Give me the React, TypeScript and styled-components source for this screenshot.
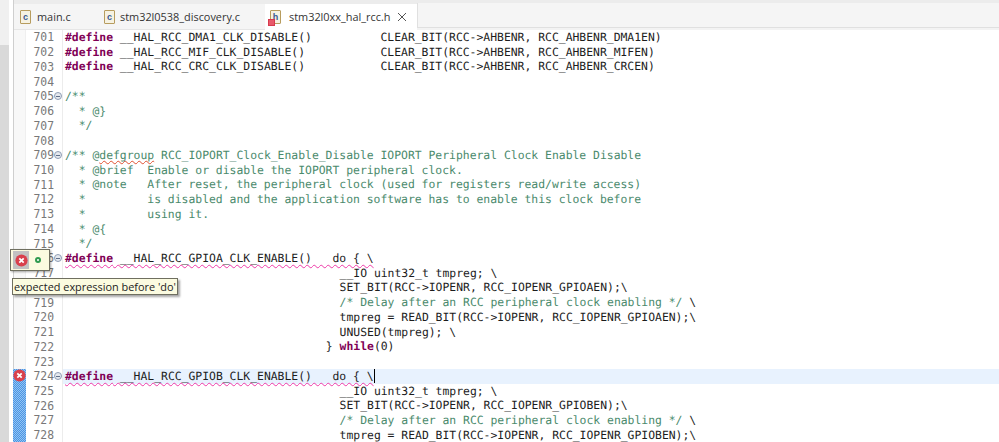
import React from 'react';
import styled, { createGlobalStyle } from 'styled-components';

const GlobalStyle = createGlobalStyle`
  html, body {
    margin: 0;
    padding: 0;
    background: #ffffff;
    overflow: hidden;
  }
`;

const Window = styled.div`
  position: relative;
  width: 999px;
  height: 442px;
  display: flex;
  overflow: hidden;
  background: #ffffff;
`;

const SideStrip = styled.div`
  width: 14px;
  flex: none;
  display: flex;
  flex-direction: column;
  background: #f2f2f2;
  border-right: 1px solid #cfcfcf;
  box-sizing: border-box;
`;

const SideHead = styled.div`
  height: 45px;
  flex: none;
  border-right: 4px solid #ffffff;
  background: #f0f0f0;
`;

const SideBody = styled.div`
  flex: 1;
  border-right: 4px solid #ffffff;
  background: #d9d9d9;
`;

const Main = styled.div`
  flex: 1;
  min-width: 0;
  display: flex;
  flex-direction: column;
`;

const TabBar = styled.div`
  height: 30px;
  flex: none;
  display: flex;
  align-items: flex-end;
  background: #f3f3f3;
  box-sizing: border-box;
  padding-top: 4px;
  box-shadow: inset 0 4px 0 #ececec;
`;

const Tab = styled.div<{ $active?: boolean; $width: number; $pad: number; $gap: number }>`
  width: ${(p) => p.$width}px;
  height: 100%;
  display: flex;
  align-items: center;
  gap: ${(p) => p.$gap}px;
  padding-left: ${(p) => p.$pad}px;
  box-sizing: border-box;
  background: ${(p) => (p.$active ? '#ffffff' : '#f5f5f5')};
  border-bottom: 1px solid ${(p) => (p.$active ? '#ffffff' : '#e6e6e6')};
  font-family: 'Open Sans', 'Liberation Sans', sans-serif;
  font-size: 10.9px;
  color: #333333;
  white-space: nowrap;
`;

const TabFiller = styled.div`
  flex: 1;
  height: 24px;
  margin-bottom: 2px;
  background: #f5f5f5;
  border-left: 1px solid #e0e0e0;
  border-bottom: 1px solid #e0e0e0;
`;

const FileIcon = styled.span`
  position: relative;
  width: 11px;
  height: 14px;
  flex: none;
  border: 1px solid #b79c5e;
  border-radius: 1px;
  background: #f6f2e2;
  box-sizing: border-box;
  display: flex;
  align-items: center;
  justify-content: center;
  font-family: 'Liberation Sans', sans-serif;
  font-size: 9px;
  font-weight: 700;
  color: #3a5a94;
`;

const ErrorBadge = styled.span`
  position: absolute;
  left: -3px;
  bottom: -3px;
  width: 7px;
  height: 7px;
  background: #e85a6a;
  border: 1px solid #d83a4e;
  box-sizing: border-box;
`;

const CloseIcon = styled.svg`
  width: 10px;
  height: 10px;
  flex: none;
  margin-left: -1px;
`;

const Editor = styled.div`
  flex: 1;
  min-height: 0;
  display: flex;
  position: relative;
`;

const Ruler = styled.div`
  width: 11px;
  flex: none;
  background: #f8f8f8;
  border-right: 1px solid #efefef;
`;

const Gutter = styled.div`
  width: 36px;
  flex: none;
  border-right: 1px solid #ececec;
`;

const Code = styled.div`
  flex: 1;
  min-width: 0;
`;

const lineHeight = 14.74;

const GutterRow = styled.div`
  height: ${lineHeight}px;
  display: flex;
  align-items: center;
  font-family: 'DejaVu Sans Mono', monospace;
  font-size: 11.4px;
  color: #787878;
`;

const LineNo = styled.span`
  width: 28px;
  text-align: right;
`;

const FoldMark = styled.span`
  width: 8px;
  height: 8px;
  border: 1px solid #8f9db4;
  border-radius: 50%;
  background: #e4e8ee;
  box-sizing: border-box;
  display: flex;
  align-items: center;
  justify-content: center;
  &::before {
    content: '';
    width: 4px;
    height: 1px;
    background: #5f6f89;
  }
`;

const CodeRow = styled.div<{ $current?: boolean; $indent: number }>`
  height: ${lineHeight}px;
  padding-left: ${(p) => 2 + p.$indent * 6.865}px;
  line-height: ${lineHeight}px;
  font-family: 'DejaVu Sans Mono', monospace;
  font-size: 11.4px;
  color: #1c1c1c;
  white-space: pre;
  text-rendering: geometricPrecision;
  font-variant-ligatures: none;
  background: ${(p) => (p.$current ? '#e8f2fe' : 'transparent')};
`;

const Keyword = styled.span`
  color: #7f0055;
  font-weight: 700;
`;

const Comment = styled.span`
  color: #4a8a6c;
`;

const Squiggle = styled.span`
  text-decoration: underline wavy #ee3aa8 1px;
  text-decoration-skip-ink: none;
  text-underline-offset: 2px;
`;

const SpellWord = styled.span`
  text-decoration: underline wavy #e05030 1px;
  text-decoration-skip-ink: none;
  text-underline-offset: 1px;
`;

const Caret = styled.span`
  display: inline-block;
  width: 1px;
  height: 14px;
  background: #000000;
  vertical-align: top;
`;

const AnnotationBar = styled.div`
  position: absolute;
  left: -1px;
  top: 339px;
  width: 13px;
  height: 73px;
  background-image: repeating-conic-gradient(#4a94e4 0 25%, #93c4f2 0 50%);
  background-size: 2px 2px;
`;

const GutterError = styled.span`
  position: absolute;
  left: 13px;
  top: 369px;
  display: flex;
`;

const HoverBox = styled.div`
  position: absolute;
  left: 10px;
  top: 249px;
  width: 40px;
  height: 22px;
  display: flex;
  align-items: center;
  gap: 6px;
  padding-left: 2px;
  box-sizing: border-box;
  background: #fbfbe0;
  border: 1px solid #6f6f60;
  box-shadow: 1px 1px 2px rgba(0, 0, 0, 0.35);
`;

const HoverIconCell = styled.span`
  width: 16px;
  height: 18px;
  background: #c2c2c2;
  display: flex;
  align-items: center;
  justify-content: center;
`;

const GreenDot = styled.span`
  width: 6px;
  height: 6px;
  border: 2px solid #2e9a4e;
  border-radius: 50%;
  background: #ffffff;
  box-sizing: border-box;
`;

const Tooltip = styled.div`
  position: absolute;
  left: 12px;
  top: 278px;
  height: 17px;
  padding: 0 1px;
  display: flex;
  align-items: center;
  box-sizing: border-box;
  background: #fbfbe0;
  border: 1px solid #6f6f60;
  box-shadow: 2px 2px 2px rgba(0, 0, 0, 0.35);
  font-family: 'Open Sans', 'Liberation Sans', sans-serif;
  font-size: 10.9px;
  color: #222222;
  white-space: nowrap;
`;

const ErrorIcon = () => (
  <svg width="13" height="13" viewBox="0 0 13 13">
    <circle cx="6.5" cy="6.5" r="6.1" fill="#d9404c" />
    <path d="M4.3 4.3l4.4 4.4M8.7 4.3l-4.4 4.4" stroke="#ffffff" strokeWidth="1.7" />
  </svg>
);

type Seg = { t: string; k?: 'kw' | 'c' | 'sq' | 'sp' | 'caret' };
type Line = { n: number; fold?: boolean; current?: boolean; indent?: number; segs: Seg[] };

const pad = (n: number) => ' '.repeat(n);

const lines: Line[] = [
  { n: 701, segs: [{ t: '#define', k: 'kw' }, { t: ' __HAL_RCC_DMA1_CLK_DISABLE()' + pad(10) + 'CLEAR_BIT(RCC->AHBENR, RCC_AHBENR_DMA1EN)' }] },
  { n: 702, segs: [{ t: '#define', k: 'kw' }, { t: ' __HAL_RCC_MIF_CLK_DISABLE()' + pad(11) + 'CLEAR_BIT(RCC->AHBENR, RCC_AHBENR_MIFEN)' }] },
  { n: 703, segs: [{ t: '#define', k: 'kw' }, { t: ' __HAL_RCC_CRC_CLK_DISABLE()' + pad(11) + 'CLEAR_BIT(RCC->AHBENR, RCC_AHBENR_CRCEN)' }] },
  { n: 704, segs: [] },
  { n: 705, fold: true, segs: [{ t: '/**', k: 'c' }] },
  { n: 706, segs: [{ t: '  * @}', k: 'c' }] },
  { n: 707, segs: [{ t: '  */', k: 'c' }] },
  { n: 708, segs: [] },
  { n: 709, fold: true, segs: [{ t: '/** @', k: 'c' }, { t: 'defgroup', k: 'sp' }, { t: ' RCC_IOPORT_Clock_Enable_Disable IOPORT Peripheral Clock Enable Disable', k: 'c' }] },
  { n: 710, segs: [{ t: '  * @brief  Enable or disable the IOPORT peripheral clock.', k: 'c' }] },
  { n: 711, segs: [{ t: '  * @note   After reset, the peripheral clock (used for registers read/write access)', k: 'c' }] },
  { n: 712, segs: [{ t: '  *         is disabled and the application software has to enable this clock before', k: 'c' }] },
  { n: 713, segs: [{ t: '  *         using it.', k: 'c' }] },
  { n: 714, segs: [{ t: '  * @{', k: 'c' }] },
  { n: 715, segs: [{ t: '  */', k: 'c' }] },
  { n: 716, fold: true, segs: [{ t: '#define __HAL_RCC_GPIOA_CLK_ENABLE()   do { \\', k: 'sq' }] },
  { n: 717, indent: 40, segs: [{ t: '__IO uint32_t tmpreg; \\' }] },
  { n: 718, indent: 40, segs: [{ t: 'SET_BIT(RCC->IOPENR, RCC_IOPENR_GPIOAEN);\\' }] },
  { n: 719, indent: 40, segs: [{ t: '/* Delay after an RCC peripheral clock enabling */', k: 'c' }, { t: ' \\' }] },
  { n: 720, indent: 40, segs: [{ t: 'tmpreg = READ_BIT(RCC->IOPENR, RCC_IOPENR_GPIOAEN);\\' }] },
  { n: 721, indent: 40, segs: [{ t: 'UNUSED(tmpreg); \\' }] },
  { n: 722, indent: 38, segs: [{ t: '} ' }, { t: 'while', k: 'kw' }, { t: '(0)' }] },
  { n: 723, segs: [] },
  { n: 724, fold: true, current: true, segs: [{ t: '#define __HAL_RCC_GPIOB_CLK_ENABLE()   do { \\', k: 'sq' }, { t: '', k: 'caret' }] },
  { n: 725, indent: 40, segs: [{ t: '__IO uint32_t tmpreg; \\' }] },
  { n: 726, indent: 40, segs: [{ t: 'SET_BIT(RCC->IOPENR, RCC_IOPENR_GPIOBEN);\\' }] },
  { n: 727, indent: 40, segs: [{ t: '/* Delay after an RCC peripheral clock enabling */', k: 'c' }, { t: ' \\' }] },
  { n: 728, indent: 40, segs: [{ t: 'tmpreg = READ_BIT(RCC->IOPENR, RCC_IOPENR_GPIOBEN);\\' }] },
];

const renderSeg = (s: Seg, i: number) => {
  if (s.k === 'kw') return <Keyword key={i}>{s.t}</Keyword>;
  if (s.k === 'c') return <Comment key={i}>{s.t}</Comment>;
  if (s.k === 'sp') return <Comment key={i}><SpellWord>{s.t}</SpellWord></Comment>;
  if (s.k === 'caret') return <Caret key={i} />;
  if (s.k === 'sq') {
    return (
      <Squiggle key={i}>
        <Keyword>{s.t.slice(0, 7)}</Keyword>
        {s.t.slice(7)}
      </Squiggle>
    );
  }
  return <span key={i}>{s.t}</span>;
};

export default function App() {
  return (
    <Window>
      <GlobalStyle />
      <SideStrip>
        <SideHead />
        <SideBody />
      </SideStrip>
      <Main>
        <TabBar>
          <Tab $width={83} $pad={6} $gap={6}>
            <FileIcon>c</FileIcon>
            main.c
          </Tab>
          <Tab $width={168} $pad={7} $gap={5}>
            <FileIcon>c</FileIcon>
            stm32l0538_discovery.c
          </Tab>
          <Tab $active $width={152} $pad={5} $gap={8}>
            <FileIcon>
              h
              <ErrorBadge />
            </FileIcon>
            stm32l0xx_hal_rcc.h
            <CloseIcon viewBox="0 0 10 10">
              <path d="M1 1l8 8M9 1l-8 8" stroke="#555555" strokeWidth="1" />
            </CloseIcon>
          </Tab>
          <TabFiller />
        </TabBar>
        <Editor>
          <Ruler />
          <Gutter>
            {lines.map((l) => (
              <GutterRow key={l.n}>
                <LineNo>{l.n}</LineNo>
                {l.fold && <FoldMark />}
              </GutterRow>
            ))}
          </Gutter>
          <Code>
            {lines.map((l) => (
              <CodeRow key={l.n} $current={l.current} $indent={l.indent ?? 0}>
                {l.segs.map(renderSeg)}
              </CodeRow>
            ))}
          </Code>
          <AnnotationBar />
        </Editor>
      </Main>
      <GutterError>
        <ErrorIcon />
      </GutterError>
      <HoverBox>
        <HoverIconCell>
          <ErrorIcon />
        </HoverIconCell>
        <GreenDot />
      </HoverBox>
      <Tooltip>expected expression before 'do'</Tooltip>
    </Window>
  );
}
